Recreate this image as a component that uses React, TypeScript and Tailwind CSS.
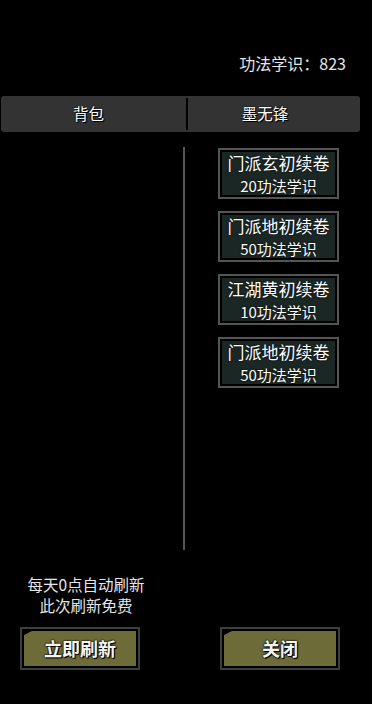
const items = [
  { name: "门派玄初续卷", cost: "20功法学识" },
  { name: "门派地初续卷", cost: "50功法学识" },
  { name: "江湖黄初续卷", cost: "10功法学识" },
  { name: "门派地初续卷", cost: "50功法学识" },
]

function ActionButton({ label }: { label: string }) {
  return (
    <div className="w-[120px] h-[43px] border-2 border-[#3e3e3e] bg-black p-[2px]">
      <div className="w-full h-full bg-[#6d6c39] flex items-center justify-center [clip-path:polygon(0_4px,8px_0,100%_0,100%_100%,0_100%)]">
        <span className="text-[18px] font-bold text-[#f4f4f4] [text-shadow:0_0_2px_#000,0_0_2px_#000,1px_1px_0_#000]">
          {label}
        </span>
      </div>
    </div>
  )
}

export default function App() {
  return (
    <div
      className="w-[372px] h-[704px] bg-black flex flex-col overflow-hidden text-[#e6e6e6]"
      style={{ fontFamily: '"Noto Sans CJK SC", "Noto Sans", sans-serif' }}
    >
      {/* Header */}
      <div className="h-[96px] flex justify-end items-start pt-[53px] pr-[26px]">
        <span className="text-[16px] leading-[20px]">功法学识：823</span>
      </div>

      {/* Tabs */}
      <div className="ml-[1px] mr-[12px] h-[36px] bg-[#333333] rounded-[3px] flex items-center">
        <div className="w-[185px] flex justify-center pr-[10px]">
          <span className="text-[15.5px] text-white [text-shadow:0_0_2px_#000,1px_1px_0_#000]">背包</span>
        </div>
        <div className="w-[2px] h-[32px] bg-black" />
        <div className="flex-1 flex justify-center pr-[18px]">
          <span className="text-[15.5px] text-white [text-shadow:0_0_2px_#000,1px_1px_0_#000]">墨无锋</span>
        </div>
      </div>

      {/* Content */}
      <div className="mt-[15px] flex h-[403px]">
        <div className="w-[183px]" />
        <div className="w-[2px] h-full bg-[#555555]" />
        <div className="flex-1 flex flex-col items-center gap-[12px] pt-[1px]">
          {items.map((item, i) => (
            <div key={i} className="w-[121px] h-[51px] border-2 border-[#555555] bg-black p-[2px]">
              <div className="w-full h-full bg-[#1b2725] flex flex-col items-center justify-center">
                <span className="text-[17px] leading-[25px] text-white [text-shadow:0_0_2px_#000]">{item.name}</span>
                <span className="text-[15px] leading-[22px] text-white [text-shadow:0_0_2px_#000]">{item.cost}</span>
              </div>
            </div>
          ))}
        </div>
      </div>

      {/* Footer */}
      <div className="mt-[24px] flex">
        <div className="w-[172px] flex flex-col items-center text-[15.5px] leading-[21px]">
          <span>每天0点自动刷新</span>
          <span>此次刷新免费</span>
        </div>
      </div>
      <div className="mt-[11px] flex justify-between pl-[20px] pr-[32px]">
        <ActionButton label="立即刷新" />
        <ActionButton label="关闭" />
      </div>
    </div>
  )
}
